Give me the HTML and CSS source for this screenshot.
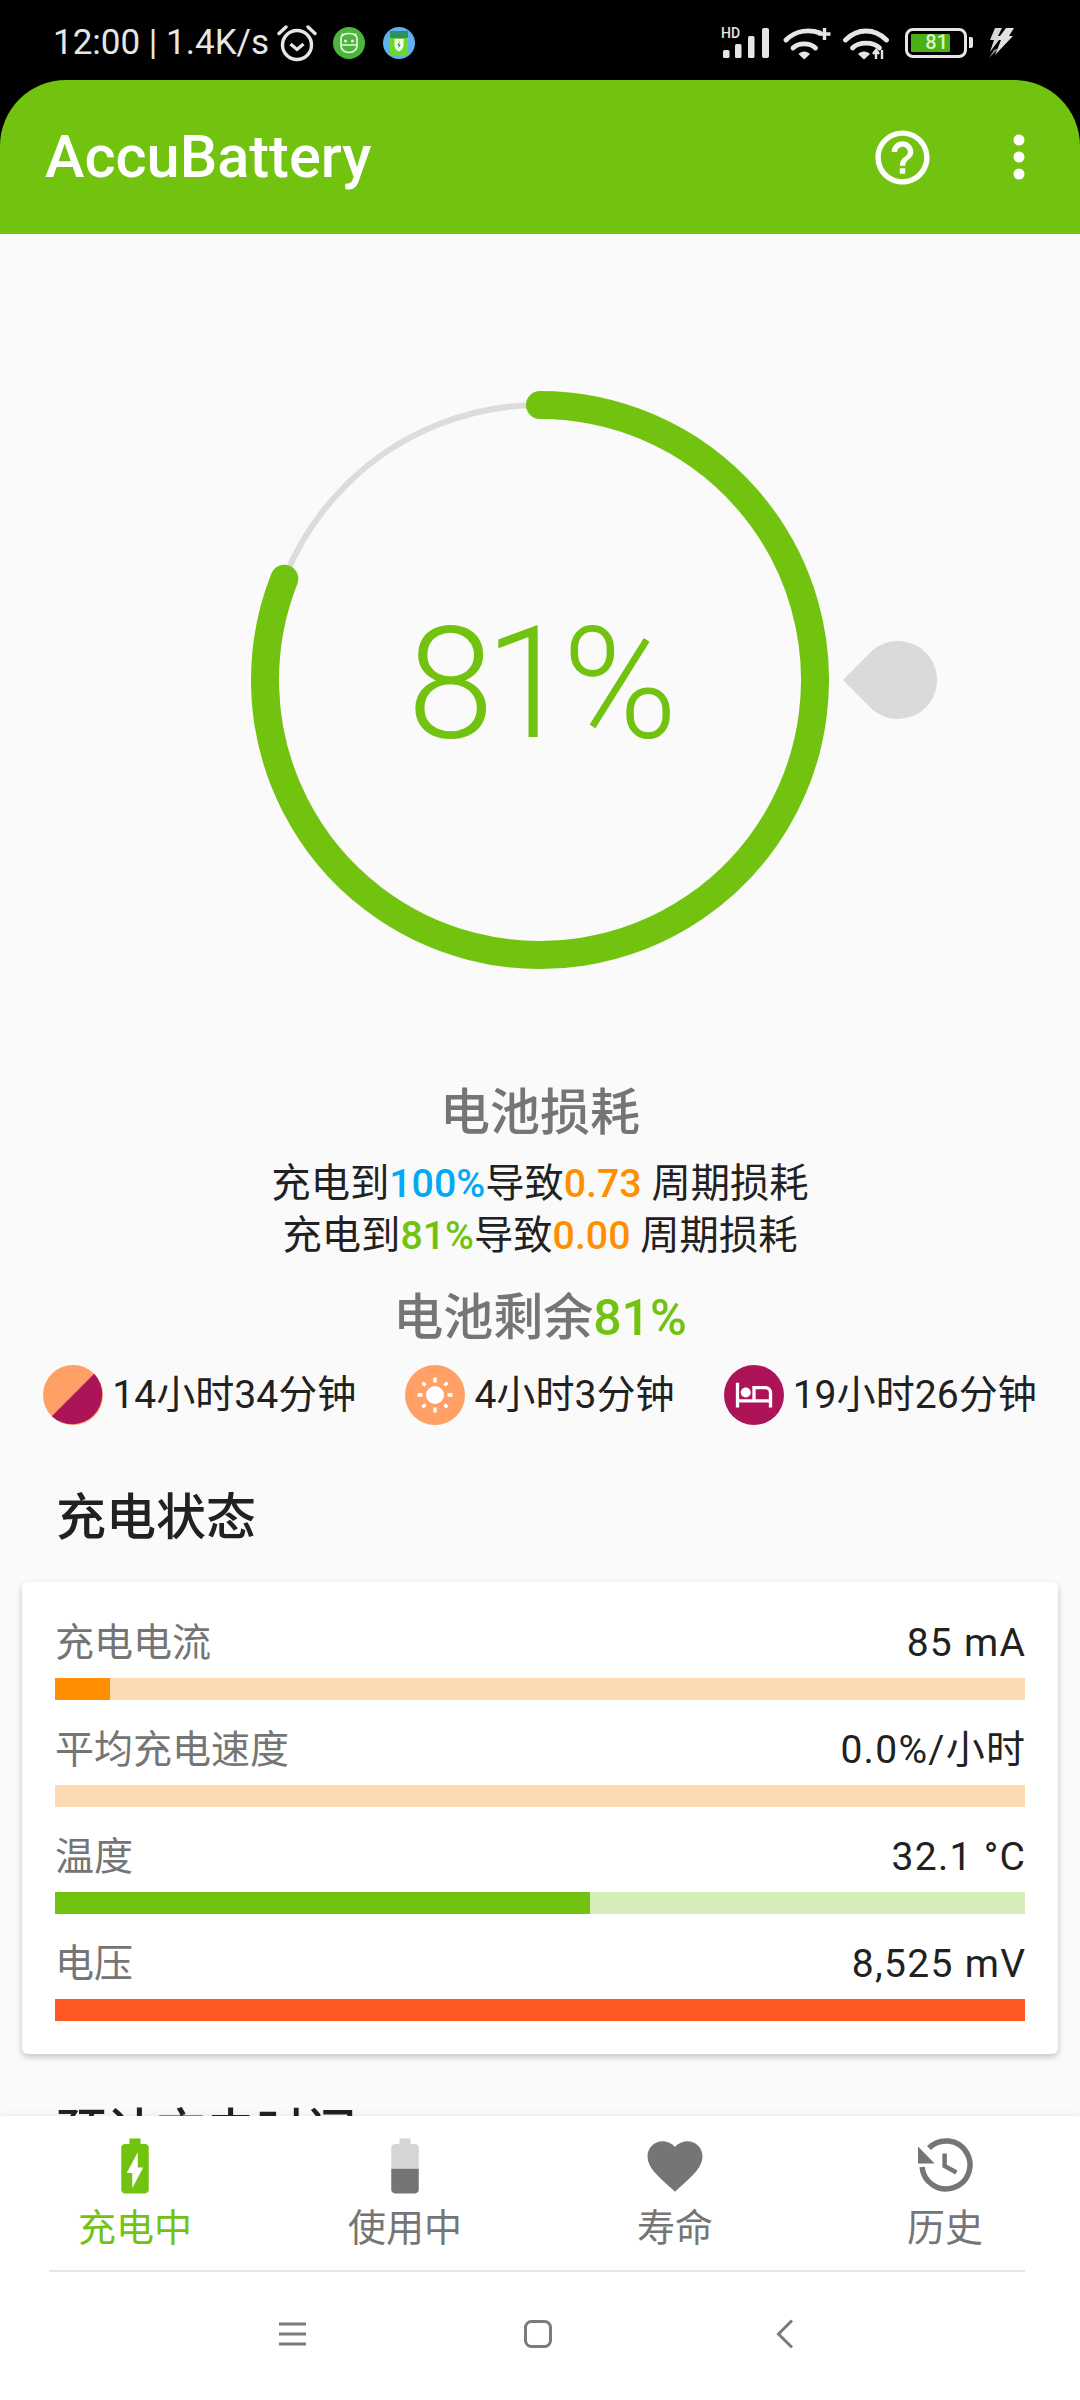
FILE: index.html
```html
<!DOCTYPE html>
<html lang="zh-CN">
<head>
<meta charset="utf-8">
<title>AccuBattery</title>
<link rel="stylesheet" href="styles.css">
</head>
<body>
<div class="screen">
  <header class="statusbar">
    <div class="status-left">
      <span class="clock">12:00 | 1.4K/s</span>
      <svg class="ic-alarm" viewBox="0 0 40 38" width="40" height="38"><circle cx="20" cy="21" r="14.5" fill="none" stroke="#e6e6e6" stroke-width="3.4"/><path d="M13.5 20l6.5 5.5 6.5-5.5" fill="none" stroke="#e6e6e6" stroke-width="3.2"/><path d="M2 9.500 9 3M38 9.500 31 3" stroke="#e6e6e6" stroke-width="3.4" stroke-linecap="round"/></svg>
      <svg class="ic-app" viewBox="0 0 32 32" width="32" height="32"><circle cx="16" cy="16" r="16" fill="#4db53b"/><path d="M8 11v8a8 6.500 0 0 0 16 0v-8a8 4.500 0 0 0-16 0z" fill="none" stroke="#eaf6e6" stroke-width="1.600"/><path d="M8 18h16M10 9 9 6.500M22 9l1-2.500" stroke="#eaf6e6" stroke-width="1.600"/><circle cx="12.500" cy="14" r="1.500" fill="#eaf6e6"/><circle cx="19.500" cy="14" r="1.500" fill="#eaf6e6"/></svg>
      <svg class="ic-app2" viewBox="0 0 32 32" width="32" height="32"><circle cx="16" cy="16" r="16" fill="#5fb2ee"/><rect x="7" y="4" width="18" height="25" rx="2" fill="#6fd62a"/><rect x="7" y="4" width="18" height="7" fill="#2f8f6a"/><path d="M11.500 12h9v6c0 3.500-2.500 5.500-4.500 6.500-2-1-4.500-3-4.500-6.500z" fill="#f3fff0"/><path d="M16.800 14l-2.500 4.500h1.700l-.800 3.500 2.500-4.500h-1.700z" fill="#1f7d5f"/></svg>
    </div>
    <div class="status-right">
      <svg class="ic-signal" viewBox="0 0 50 32" width="50" height="32"><text class="hd" x="0" y="10.500">HD</text><g fill="#e6e6e6"><rect x="2" y="23" width="6.500" height="8" rx="1.500"/><rect x="14" y="17" width="6.500" height="14" rx="1.500"/><rect x="27" y="9" width="6.500" height="22" rx="1.500"/><rect x="41" y="1" width="7" height="30" rx="2"/></g></svg>
      <svg class="ic-wifi" viewBox="0 0 50 34" width="50" height="34"><g fill="none" stroke="#e6e6e6" stroke-width="4.800" stroke-linecap="round"><path d="M3 14C13 4 27 3 37 7"/><path d="M10 22c5.500-5.500 17-5.500 22.500 0"/></g><path d="M15.500 28c3-3.500 8.500-3.500 11.500 0l-5.750 5.500z" fill="#e6e6e6"/><path d="M41.500 2v12M35.500 8h12" stroke="#e6e6e6" stroke-width="3.400"/></svg>
      <svg class="ic-wifi2" viewBox="0 0 46 34" width="46" height="34"><g fill="none" stroke="#e6e6e6" stroke-width="4.800" stroke-linecap="round"><path d="M2.500 14c12-12 29-12 41 0"/><path d="M9.500 22c6-6.500 21-6.500 27 0"/></g><path d="M15 28c3-3.500 9-3.500 12 0l-6 5.500z" fill="#e6e6e6"/><path d="M33 24v9M30 28l3-4 3 4M39 33v-9" stroke="#e6e6e6" stroke-width="2.400" fill="none"/></svg>
      <div class="battery"><div class="battery-shell"><div class="battery-fill"><span class="battery-num">81</span></div></div><span class="battery-nub"></span></div>
      <svg class="ic-flash" viewBox="0 0 28 32" width="28" height="32"><path d="M8 1h7l-4 8h4L3 25l4-12H3z" fill="#d8d8d8"/><path d="M19 1h8l-5 8h4L8 28l6-15h-4z" fill="#e2e2e2"/><path d="M12 21 2 31l5-8z" fill="#8c8c8c"/></svg>
    </div>
  </header>

  <div class="appbar">
    <h1 class="app-title">AccuBattery</h1>
    <div class="app-actions">
      <svg class="ic-help" viewBox="0 0 24 24" width="65" height="65"><path fill="#fff" d="M11 18h2v-2h-2v2zm1-16C6.480 2 2 6.480 2 12s4.480 10 10 10 10-4.480 10-10S17.520 2 12 2zm0 18c-4.410 0-8-3.590-8-8s3.590-8 8-8 8 3.590 8 8-3.590 8-8 8zm0-14c-2.210 0-4 1.790-4 4h2c0-1.100.9-2 2-2s2 .9 2 2c0 2-3 1.750-3 5h2c0-2.250 3-2.500 3-5 0-2.210-1.790-4-4-4z"/></svg>
      <svg class="ic-more" viewBox="0 0 12 46" width="12" height="46"><circle cx="6" cy="6" r="5.500" fill="#fff"/><circle cx="6" cy="23" r="5.500" fill="#fff"/><circle cx="6" cy="40" r="5.500" fill="#fff"/></svg>
    </div>
  </div>

  <main class="content">
    <section class="gauge">
      <svg class="gauge-svg" viewBox="0 0 1080 600" width="1080" height="600">
        <circle cx="540" cy="300" r="275" fill="none" stroke="#dcdcdc" stroke-width="6"/>
        <path d="M540 25A275 275 0 1 1 284.300 198.800" fill="none" stroke="#71c310" stroke-width="28" stroke-linecap="round"/>
        <path d="M843 300 870.300 272.500A39 39 0 0 1 937 300 39 39 0 0 1 870.300 327.500z" fill="#dadada"/>
      </svg>
      <div class="gauge-value">81%</div>
    </section>

    <h2 class="wear-title">电池损耗</h2>
    <p class="wear-lines">
      <span class="wear-line">充电到<span class="blue">100%</span>导致<span class="orange">0.73</span> 周期损耗</span>
      <span class="wear-line">充电到<span class="green">81%</span>导致<span class="orange">0.00</span> 周期损耗</span>
    </p>
    <h2 class="remain-title">电池剩余<span class="green">81%</span></h2>

    <div class="times">
      <div class="time">
        <svg viewBox="0 0 60 60" width="60" height="60"><circle cx="30" cy="30" r="30" fill="#ffa066"/><path d="M51.200 8.800A30 30 0 0 1 8.800 51.200z" fill="#ad1457"/></svg>
        <span>14小时34分钟</span>
      </div>
      <div class="time">
        <svg viewBox="0 0 60 60" width="60" height="60"><circle cx="30" cy="30" r="30" fill="#ffa066"/><circle cx="30" cy="30" r="9" fill="#fff"/><g stroke="#fff" stroke-width="3.400"><path d="M30 12.500v5M30 42.500v5M12.500 30h5M42.500 30h5M17.600 17.600l3 3M39.400 39.400l3 3M42.400 17.600l-3 3M20.600 39.400l-3 3"/></g></svg>
        <span>4小时3分钟</span>
      </div>
      <div class="time">
        <svg viewBox="0 0 60 60" width="60" height="60"><circle cx="30" cy="30" r="30" fill="#ad1457"/><g transform="translate(10.200 9.400) scale(1.650)"><path fill="#fff" d="M7 14c1.660 0 3-1.340 3-3S8.660 8 7 8s-3 1.340-3 3 1.340 3 3 3z"/><path fill="#fff" d="M19 7h-8v8H3V5H1v15h2v-3h18v3h2v-9c0-2.210-1.790-4-4-4zm2 8h-8V9h6c1.100 0 2 .9 2 2v4z"/></g></svg>
        <span>19小时26分钟</span>
      </div>
    </div>

    <h2 class="section-title">充电状态</h2>
    <div class="card">
      <div class="stat">
        <div class="stat-head"><span class="stat-label">充电电流</span><span class="stat-value">85 mA</span></div>
        <div class="bar bar-orange"><div class="bar-fill" style="width:5.700%"></div></div>
      </div>
      <div class="stat">
        <div class="stat-head"><span class="stat-label">平均充电速度</span><span class="stat-value">0.0%/小时</span></div>
        <div class="bar bar-orange"><div class="bar-fill" style="width:0%"></div></div>
      </div>
      <div class="stat">
        <div class="stat-head"><span class="stat-label">温度</span><span class="stat-value">32.1 °C</span></div>
        <div class="bar bar-green"><div class="bar-fill" style="width:55.200%"></div></div>
      </div>
      <div class="stat">
        <div class="stat-head"><span class="stat-label">电压</span><span class="stat-value">8,525 mV</span></div>
        <div class="bar bar-red"><div class="bar-fill" style="width:100%"></div></div>
      </div>
    </div>
    <h2 class="section-title next">预计充电时间</h2>
  </main>

  <footer class="bottom">
    <nav class="tabs">
      <div class="tab active">
        <svg viewBox="0 0 24 24" width="66" height="66"><path fill="#71c310" d="M15.670 4H14V2h-4v2H8.330C7.600 4 7 4.600 7 5.330v15.330C7 21.400 7.600 22 8.330 22h7.330c.74 0 1.340-.6 1.340-1.330V5.330C17 4.600 16.400 4 15.670 4zM11 20v-5.500H9L13 7v5.500h2L11 20z"/></svg>
        <span>充电中</span>
      </div>
      <div class="tab">
        <svg viewBox="0 0 24 24" width="66" height="66"><path fill="#757575" fill-opacity=".3" d="M17 5.330C17 4.600 16.400 4 15.670 4H14V2h-4v2H8.330C7.600 4 7 4.600 7 5.330V13h10V5.330z"/><path fill="#757575" d="M7 13v7.670C7 21.400 7.600 22 8.330 22h7.330c.74 0 1.340-.6 1.340-1.330V13H7z"/></svg>
        <span>使用中</span>
      </div>
      <div class="tab">
        <svg viewBox="0 0 24 24" width="66" height="66"><path fill="#757575" d="M12 21.350l-1.450-1.320C5.400 15.360 2 12.280 2 8.500 2 5.420 4.420 3 7.500 3c1.740 0 3.410.81 4.500 2.090C13.090 3.810 14.760 3 16.500 3 19.580 3 22 5.420 22 8.500c0 3.780-3.400 6.860-8.550 11.540L12 21.350z"/></svg>
        <span>寿命</span>
      </div>
      <div class="tab">
        <svg viewBox="0 0 66 66" width="66" height="66"><path d="M17 15A24 24 0 1 1 10.100 34" fill="none" stroke="#757575" stroke-width="5.500"/><path d="M6 13.500v17h16.700z" fill="#757575"/><path d="M32.600 20.500v12.500l11.800 6.500" fill="none" stroke="#757575" stroke-width="4.500"/></svg>
        <span>历史</span>
      </div>
    </nav>
    <div class="divider"></div>
    <div class="sysnav">
      <svg viewBox="0 0 28 26" width="28" height="26"><path d="M0 3h27M0 13h27M0 23h27" stroke="#7b7b7b" stroke-width="3"/></svg>
      <svg viewBox="0 0 28 28" width="28" height="28"><rect x="1.500" y="1.500" width="25" height="25" rx="6" fill="none" stroke="#7b7b7b" stroke-width="3"/></svg>
      <svg viewBox="0 0 18 30" width="18" height="30"><path d="M16 1.500 2.500 15 16 28.500" fill="none" stroke="#7b7b7b" stroke-width="3"/></svg>
    </div>
  </footer>
</div>
</body>
</html>
```

FILE: styles.css
```css
* { box-sizing: border-box; }
html, body { margin: 0; padding: 0; background: #000; }
body { font-family: Roboto, "Noto Sans CJK SC", sans-serif; color: #212121; }
svg { display: block; flex: none; }

.screen { width: 1080px; height: 2400px; display: flex; flex-direction: column; overflow: hidden; background: #000; }

/* status bar */
.statusbar { height: 80px; flex: none; display: flex; justify-content: space-between; align-items: center; padding: 5px 65px 0 53px; background: #000; }
.status-left, .status-right { display: flex; align-items: center; }
.clock { font-size: 35px; line-height: 46px; color: #e6e6e6; width: 224px; white-space: nowrap; }
.ic-app { margin-left: 16px; }
.ic-app2 { margin-left: 18px; }
.ic-signal { overflow: visible; }
.hd { font: 500 14px Roboto, sans-serif; fill: #e6e6e6; }
.ic-wifi { margin-left: 12px; }
.ic-wifi2 { margin-left: 10px; }
.battery { display: flex; align-items: center; margin-left: 16px; }
.battery-shell { width: 62px; height: 30px; border: 3.5px solid #e6e6e6; border-radius: 8px; padding: 3px 14px 3px 3px; }
.battery-fill { height: 100%; background: #4caf14; border-radius: 1px; display: flex; justify-content: flex-end; align-items: center; padding-right: 2px; }
.battery-num { font-size: 20px; line-height: 17px; color: #d8f5c4; font-weight: 500; }
.battery-nub { width: 4px; height: 11px; margin-left: 2px; background: #e6e6e6; border-radius: 0 2px 2px 0; }
.ic-flash { margin-left: 14px; }

/* app bar */
.appbar { height: 154px; flex: none; display: flex; justify-content: space-between; align-items: center; padding: 0 55px 0 45px; background: #71c310; border-radius: 66px 66px 0 0; }
.app-title { margin: 0; font-size: 59.5px; line-height: 70px; font-weight: 500; color: #fff; }
.app-actions { display: flex; align-items: center; gap: 78px; }

/* scrolling content */
.content { flex: 1; min-height: 0; overflow: hidden; background: #fafafa; display: flex; flex-direction: column; align-items: stretch; text-align: center; }
.gauge { position: relative; margin-top: 146px; height: 600px; flex: none; }
.gauge-value { position: absolute; inset: 0; padding: 7px 4px 0 0; display: flex; align-items: center; justify-content: center; font-size: 156px; line-height: 1; font-weight: 300; letter-spacing: -9px; color: #71c310; }

.wear-title, .remain-title, .section-title { margin: 0; font-size: 50px; line-height: 56px; font-weight: 500; flex: none; }
.wear-title { margin-top: 105px; color: #757575; }
.wear-lines { margin: 17px 0 0; display: flex; flex-direction: column; flex: none; }
.wear-line { font-size: 39.3px; line-height: 52px; color: #212121; }
.wear-line span { font-weight: 500; }
.remain-title { margin-top: 28px; color: #757575; }
.blue { color: #03a9f4; }
.orange { color: #ff8f00; }
.green { color: #71c310; }

.times { margin-top: 19px; height: 60px; flex: none; display: flex; justify-content: center; gap: 49px; }
.time { display: flex; align-items: center; gap: 9px; font-size: 39.1px; line-height: 60px; white-space: nowrap; }

.section-title { margin-top: 65px; padding: 0 56px; text-align: left; color: #212121; }
.section-title.next { margin-top: 51px; }

.card { margin: 36px 22px 0; height: 472px; flex: none; padding: 38px 33px 0; background: #fff; border-radius: 6px; box-shadow: 0 3px 6px rgba(0,0,0,.22); display: flex; flex-direction: column; gap: 27px; text-align: left; }
.stat-head { display: flex; justify-content: space-between; align-items: center; height: 46px; font-size: 39px; line-height: 46px; }
.stat-label { color: #757575; }
.stat-value { color: #212121; letter-spacing: 1.3px; margin-right: -1.3px; }
.bar { height: 22px; margin-top: 12px; }
.bar-fill { height: 100%; }
.bar-orange { background: #fddbb2; }
.bar-orange .bar-fill { background: #ff8f00; }
.bar-green { background: #d5edb8; }
.bar-green .bar-fill { background: #71c310; }
.bar-red { background: #ffccbc; }
.bar-red .bar-fill { background: #ff5722; }

/* bottom */
.bottom { height: 284px; flex: none; background: #fff; box-shadow: 0 -2px 6px rgba(0,0,0,.06); position: relative; display: flex; flex-direction: column; }
.tabs { height: 154px; display: grid; grid-template-columns: repeat(4, 270px); flex: none; }
.tab { display: flex; flex-direction: column; align-items: center; padding-top: 17px; gap: 6px; font-size: 38px; line-height: 46px; color: #757575; }
.tab.active { color: #71c310; }
.divider { height: 2px; margin: 0 55px 0 49px; background: #e6e6e6; flex: none; }
.sysnav { flex: 1; display: grid; grid-template-columns: 244px 246px 248px; justify-content: center; justify-items: center; align-items: center; padding-bottom: 4px; }
```
